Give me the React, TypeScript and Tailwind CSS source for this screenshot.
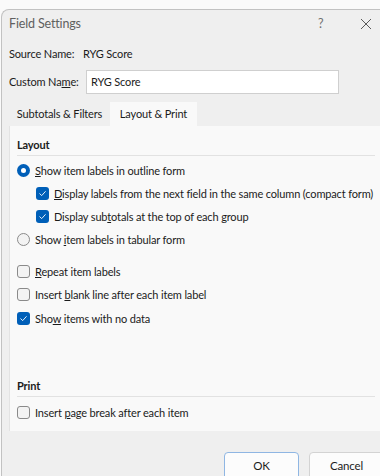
import React from "react";

const Check: React.FC<{ checked?: boolean }> = ({ checked }) =>
  checked ? (
    <span className="flex h-[13px] w-[13px] shrink-0 items-center justify-center rounded-[3px] bg-[#005fb8]">
      <svg width="9" height="9" viewBox="0 0 9 9" fill="none">
        <path d="M1.8 4.8 L3.7 6.6 L7.3 2.6" stroke="#ffffff" strokeWidth="0.9" strokeLinecap="round" strokeLinejoin="round" />
      </svg>
    </span>
  ) : (
    <span className="h-[13px] w-[13px] shrink-0 rounded-[3px] border border-[#8a8a8a] bg-[#f3f3f3]" />
  );

const Radio: React.FC<{ checked?: boolean }> = ({ checked }) =>
  checked ? (
    <span className="flex h-[13px] w-[13px] shrink-0 items-center justify-center rounded-full bg-[#005fb8]">
      <span className="h-[5px] w-[5px] rounded-full bg-white" />
    </span>
  ) : (
    <span className="h-[13px] w-[13px] shrink-0 rounded-full border border-[#8a8a8a] bg-[#f3f3f3]" />
  );

const Row: React.FC<{ control: React.ReactNode; className?: string; children: React.ReactNode }> = ({
  control,
  className,
  children,
}) => (
  <div className={"flex h-[23px] items-center gap-[5px] " + (className ?? "")}>
    {control}
    <span>{children}</span>
  </div>
);

export default function App() {
  return (
    <div
      className="h-[476px] w-[380px] overflow-hidden whitespace-nowrap bg-[#fafafa] pl-[1px] pt-[9px] text-[11px] leading-[16px] tracking-[-0.15px] text-[#1b1b1b]"
      style={{ fontFamily: "Lato, 'Liberation Sans', sans-serif" }}
    >
      <div className="flex h-[480px] w-[400px] flex-col rounded-tl-[8px] border-l border-t border-[#c2c2c2] bg-[#efefef]">
        {/* Title bar */}
        <div className="flex h-[28px] items-center pl-[7px] text-[12.5px] text-[#606060]">
          <span className="w-[309px]">Field Settings</span>
          <span className="text-[#707070]">?</span>
          <svg className="ml-[37px]" width="12" height="12" viewBox="0 0 12 12">
            <path d="M1 1 L11 11 M11 1 L1 11" stroke="#5a5a5a" strokeWidth="1" />
          </svg>
        </div>

        {/* Source name */}
        <div className="mt-[5px] flex h-[22px] items-center pl-[7px]">
          <span className="w-[74px]">Source Name:</span>
          <span>RYG Score</span>
        </div>

        {/* Custom name */}
        <div className="mt-[5px] flex h-[24px] items-center pl-[7px]">
          <span className="w-[77px]">
            Custom Na<span className="underline">m</span>e:
          </span>
          <div className="flex h-[24px] w-[253px] items-center border border-[#cfcfcf] bg-white pl-[4px]">
            RYG Score
          </div>
        </div>

        {/* Tabs */}
        <div className="mt-[8px] flex h-[24px] items-stretch pl-[7px]">
          <div className="flex w-[101px] items-center justify-center">Subtotals &amp; Filters</div>
          <div className="flex w-[87px] items-center justify-center bg-[#f9f9f9]">Layout &amp; Print</div>
        </div>

        {/* Panel */}
        <div className="ml-[7px] flex h-[305px] flex-col border-l border-[#e3e3e3] bg-[#f9f9f9] pl-[7px] pr-[26px]">
          <div className="mt-[11px] border-b border-[#e2e2e2] pb-[2px] font-bold">Layout</div>
          <Row className="mt-[3px]" control={<Radio checked />}>
            <span className="underline">S</span>how item labels in outline form
          </Row>
          <Row className="ml-[19px]" control={<Check checked />}>
            <span className="underline">D</span>isplay labels from the next field in the same column (compact form)
          </Row>
          <Row className="ml-[19px]" control={<Check checked />}>
            Display sub<span className="underline">t</span>otals at the top of each group
          </Row>
          <Row control={<Radio />}>
            Show <span className="underline">i</span>tem labels in tabular form
          </Row>
          <Row className="mt-[9px]" control={<Check />}>
            <span className="underline">R</span>epeat item labels
          </Row>
          <Row control={<Check />}>
            Insert <span className="underline">b</span>lank line after each item label
          </Row>
          <Row className="mt-[1px]" control={<Check checked />}>
            Sho<span className="underline">w</span> items with no data
          </Row>
          <div className="mt-[48px] border-b border-[#e2e2e2] pb-[2px] font-bold">Print</div>
          <Row className="mt-[4px]" control={<Check />}>
            Insert <span className="underline">p</span>age break after each item
          </Row>
        </div>

        {/* Buttons */}
        <div className="mt-[21px] flex gap-[10px] pl-[222px] text-[11.5px]">
          <button className="h-[28px] w-[75px] rounded-[4px] border border-[#8fb6e3] bg-[#fcfcfc]">OK</button>
          <button className="h-[28px] w-[75px] rounded-[4px] border border-[#d3d3d3] bg-[#fcfcfc]">Cancel</button>
        </div>
      </div>
    </div>
  );
}
